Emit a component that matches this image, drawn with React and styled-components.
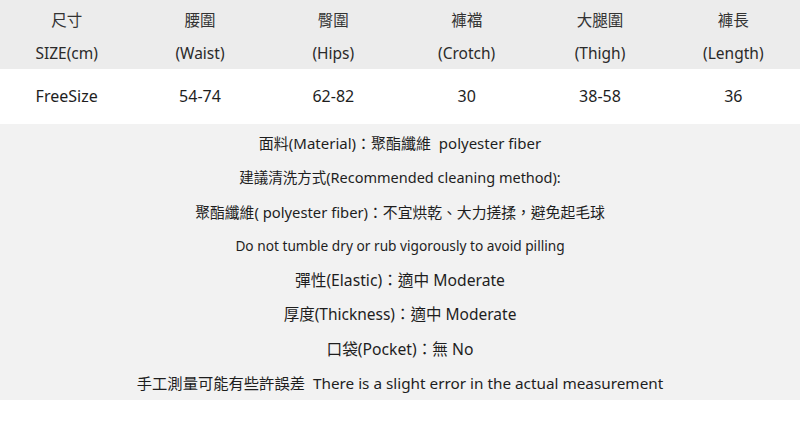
import React from "react";
import styled, { createGlobalStyle } from "styled-components";

const Global = createGlobalStyle`
  html, body { margin: 0; padding: 0; background: #ffffff; }
  body {
    font-family: "Noto Sans", "Noto Sans CJK TC", sans-serif;
    color: #222222;
    width: 800px;
    height: 436px;
    overflow: hidden;
  }
`;

const Page = styled.div`
  width: 800px;
  display: flex;
  flex-direction: column;
`;

const HeaderBand = styled.div`
  background: #ececec;
  height: 69px;
  padding-top: 2px;
  box-sizing: border-box;
  display: grid;
  grid-template-columns: repeat(6, 1fr);
`;

const HeaderCell = styled.div`
  display: flex;
  flex-direction: column;
  align-items: center;
`;

const CnLabel = styled.div`
  font-family: "Noto Sans CJK TC", sans-serif;
  font-size: 15.5px;
  line-height: 34px;
  color: #333333;
`;

const EnLabel = styled.div`
  font-size: 15.5px;
  line-height: 34px;
  color: #2a2a2a;
`;

const DataRow = styled.div`
  background: #ffffff;
  height: 55px;
  display: grid;
  grid-template-columns: repeat(6, 1fr);
`;

const DataCell = styled.div`
  font-size: 16px;
  line-height: 55px;
  text-align: center;
  color: #1e1e1e;
`;

const InfoPanel = styled.div`
  background: #f2f2f2;
  height: 276px;
  padding-top: 2px;
  box-sizing: border-box;
  display: flex;
  flex-direction: column;
  align-items: center;
`;

const InfoLine = styled.div`
  font-family: "Noto Sans", "Noto Sans CJK TC", sans-serif;
  font-size: ${(p) => p.$size}px;
  line-height: 34.25px;
  white-space: pre;
  color: #1e1e1e;
`;

const columns = [
  { cn: "尺寸", en: "SIZE(cm)", val: "FreeSize" },
  { cn: "腰圍", en: "(Waist)", val: "54-74" },
  { cn: "臀圍", en: "(Hips)", val: "62-82" },
  { cn: "褲襠", en: "(Crotch)", val: "30" },
  { cn: "大腿圍", en: "(Thigh)", val: "38-58" },
  { cn: "褲長", en: "(Length)", val: "36" },
];

const lines = [
  { text: "面料(Material)：聚酯纖維  polyester fiber", size: 15 },
  { text: "建議清洗方式(Recommended cleaning method):", size: 14.5 },
  { text: "聚酯纖維( polyester fiber)：不宜烘乾、大力搓揉，避免起毛球", size: 14.8 },
  { text: "Do not tumble dry or rub vigorously to avoid pilling", size: 13.7 },
  { text: "彈性(Elastic)：適中 Moderate", size: 15.7 },
  { text: "厚度(Thickness)：適中 Moderate", size: 15.5 },
  { text: "口袋(Pocket)：無 No", size: 15.7 },
  { text: "手工測量可能有些許誤差  There is a slight error in the actual measurement", size: 15.3 },
];

export default function App() {
  return (
    <Page>
      <Global />
      <HeaderBand>
        {columns.map((c) => (
          <HeaderCell key={c.cn}>
            <CnLabel>{c.cn}</CnLabel>
            <EnLabel>{c.en}</EnLabel>
          </HeaderCell>
        ))}
      </HeaderBand>
      <DataRow>
        {columns.map((c) => (
          <DataCell key={c.cn}>{c.val}</DataCell>
        ))}
      </DataRow>
      <InfoPanel>
        {lines.map((l) => (
          <InfoLine key={l.text} $size={l.size}>
            {l.text}
          </InfoLine>
        ))}
      </InfoPanel>
    </Page>
  );
}
